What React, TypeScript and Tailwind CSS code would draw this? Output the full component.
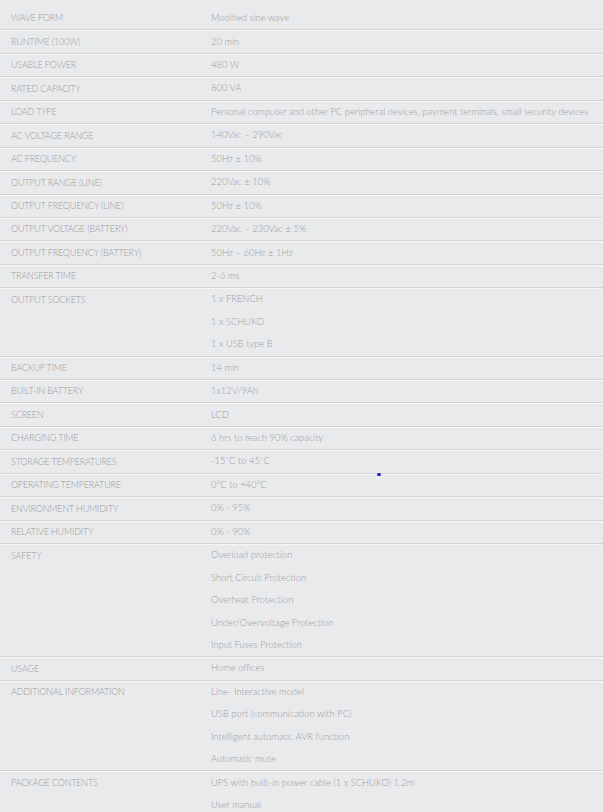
import React from 'react';

type Spec = { label: string; values: string[] };

const specs: Spec[] = [
  { label: 'WAVE FORM', values: ['Modified sine wave'] },
  { label: 'RUNTIME (100W)', values: ['20 min'] },
  { label: 'USABLE POWER', values: ['480 W'] },
  { label: 'RATED CAPACITY', values: ['800 VA'] },
  { label: 'LOAD TYPE', values: ['Personal computer and other PC peripheral devices, payment terminals, small security devices'] },
  { label: 'AC VOLTAGE RANGE', values: ['140Vac – 290Vac'] },
  { label: 'AC FREQUENCY', values: ['50Hz ± 10%'] },
  { label: 'OUTPUT RANGE (LINE)', values: ['220Vac ± 10%'] },
  { label: 'OUTPUT FREQUENCY (LINE)', values: ['50Hz ± 10%'] },
  { label: 'OUTPUT VOLTAGE (BATTERY)', values: ['220Vac – 230Vac ± 5%'] },
  { label: 'OUTPUT FREQUENCY (BATTERY)', values: ['50Hz – 60Hz ± 1Hz'] },
  { label: 'TRANSFER TIME', values: ['2-6 ms'] },
  { label: 'OUTPUT SOCKETS', values: ['1 x FRENCH', '1 x SCHUKO', '1 x USB type B'] },
  { label: 'BACKUP TIME', values: ['14 min'] },
  { label: 'BUILT-IN BATTERY', values: ['1x12V/9Ah'] },
  { label: 'SCREEN', values: ['LCD'] },
  { label: 'CHARGING TIME', values: ['6 hrs to reach 90% capacity'] },
  { label: 'STORAGE TEMPERATURES', values: ['-15˚C to 45˚C'] },
  { label: 'OPERATING TEMPERATURE', values: ['0°C to +40°C'] },
  { label: 'ENVIRONMENT HUMIDITY', values: ['0% - 95%'] },
  { label: 'RELATIVE HUMIDITY', values: ['0% - 90%'] },
  {
    label: 'SAFETY',
    values: [
      'Overload protection',
      'Short Circuit Protection',
      'Overheat Protection',
      'Under/Overvoltage Protection',
      'Input Fuses Protection',
    ],
  },
  { label: 'USAGE', values: ['Home offices'] },
  {
    label: 'ADDITIONAL INFORMATION',
    values: [
      'Line- Interactive model',
      'USB port (communication with PC)',
      'Intelligent automatic AVR function',
      'Automatic mute',
    ],
  },
  { label: 'PACKAGE CONTENTS', values: ['UPS with built-in power cable (1 x SCHUKO) 1.2m', 'User manual'] },
];

const App: React.FC = () => {
  return (
    <div className="relative min-h-[812px] bg-[#e9eaec] pt-[7px] font-['Lato',sans-serif] text-[9.4px] font-light text-[#9c9d9e]">
      {specs.map((spec, i) => (
        <div
          key={spec.label}
          className={`grid grid-cols-[200px_1fr] ${i < specs.length - 1 ? 'border-b border-[#d3d4d6] shadow-[0_1px_0_#f6f6f7]' : ''}`}
        >
          <div className="flex h-[22.45px] items-center pl-[11px] text-[9px] tracking-[-0.02em]">{spec.label}</div>
          <div className="flex flex-col pl-[11px]">
            {spec.values.map((value) => (
              <p key={value} className="flex h-[22.45px] items-center whitespace-nowrap">
                {value}
              </p>
            ))}
          </div>
        </div>
      ))}
      <span className="absolute left-[377px] top-[473px] h-[3px] w-[4px] rounded-full bg-[#1a22c8]" />
    </div>
  );
};

export default App;
